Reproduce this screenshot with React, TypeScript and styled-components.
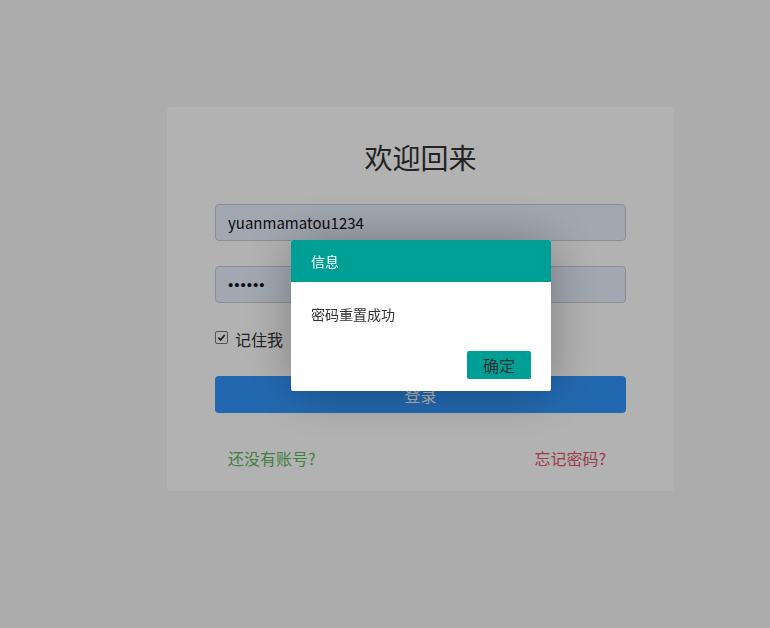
import React from "react";
import styled, { createGlobalStyle } from "styled-components";

const GlobalStyle = createGlobalStyle`
  html, body {
    margin: 0;
    padding: 0;
    background: #f7f7f7;
    font-family: "Noto Sans CJK SC", "Open Sans", sans-serif;
  }
  #root {
    min-height: 628px;
  }
`;

const Page = styled.div`
  min-height: 628px;
  padding: 107px 0 0 167px;
  box-sizing: border-box;
`;

const Card = styled.div`
  width: 507px;
  box-sizing: border-box;
  background: #fff;
  border-radius: 4px;
  padding: 29px 48px 22px;
  display: flex;
  flex-direction: column;
`;

const Title = styled.h2`
  margin: 0 0 26px;
  font-size: 28px;
  font-weight: 400;
  line-height: 42px;
  text-align: center;
  color: #333;
`;

const Input = styled.input<{ $mb?: number; $dots?: boolean }>`
  height: 37px;
  box-sizing: border-box;
  border: 1px solid #c9ccd3;
  border-radius: 4px;
  background: #e8f0fe;
  padding: 0 12px;
  font-family: ${(p) =>
    p.$dots ? '"Liberation Sans", sans-serif' : '"Noto Sans CJK SC", "Open Sans", sans-serif'};
  font-size: 15px;
  letter-spacing: ${(p) => (p.$dots ? "1px" : "0")};
  color: #111;
  margin-bottom: ${(p) => p.$mb ?? 25}px;
  outline: none;
`;

const RememberRow = styled.label`
  display: flex;
  align-items: center;
  gap: 7px;
  font-size: 16px;
  color: #333;
  height: 22px;
  margin: 0 0 26px;
`;

const CheckBox = styled.span`
  width: 11px;
  height: 11px;
  border: 1px solid #767676;
  border-radius: 2px;
  background: #fff;
  display: flex;
  align-items: center;
  justify-content: center;
  margin-top: -4px;
`;

const LoginButton = styled.button`
  height: 37px;
  border: none;
  border-radius: 4px;
  background: #3296fc;
  color: #fff;
  font-family: "Noto Sans CJK SC", "Open Sans", sans-serif;
  font-size: 16px;
  margin-bottom: 34px;
`;

const Links = styled.div`
  display: flex;
  justify-content: space-between;
  padding: 0 20px 0 13px;
  font-size: 16px;
  line-height: 22px;
`;

const LinkText = styled.a<{ $color: string }>`
  color: ${(p) => p.$color};
  text-decoration: none;
`;

const Shade = styled.div`
  position: fixed;
  inset: 0;
  background: #000;
  opacity: 0.3;
`;

const Dialog = styled.div`
  position: fixed;
  left: 291px;
  top: 240px;
  width: 260px;
  background: #fff;
  border-radius: 2px;
  box-shadow: 1px 1px 50px rgba(0, 0, 0, 0.3);
  overflow: hidden;
`;

const DialogTitle = styled.div`
  height: 42px;
  line-height: 42px;
  padding: 0 20px;
  background: #009f95;
  color: #fff;
  font-size: 14px;
`;

const DialogBody = styled.div`
  padding: 20px;
  font-size: 14px;
  line-height: 24px;
  color: #333;
`;

const DialogFooter = styled.div`
  display: flex;
  justify-content: flex-end;
  padding: 5px 20px 12px;
`;

const DialogButton = styled.a`
  height: 28px;
  line-height: 28px;
  padding: 0 16px;
  background: #009f95;
  border-radius: 2px;
  color: #333;
  font-size: 16px;
  cursor: pointer;
`;

export default function App() {
  return (
    <>
      <GlobalStyle />
      <Page>
        <Card>
          <Title>欢迎回来</Title>
          <Input defaultValue="yuanmamatou1234" />
          <Input type="password" defaultValue="123456" $dots $mb={25} />
          <RememberRow>
            <CheckBox>
              <svg width="9" height="9" viewBox="0 0 10 10">
                <path d="M1.5 5.2 L4 7.6 L8.6 2.2" fill="none" stroke="#333" strokeWidth="2" />
              </svg>
            </CheckBox>
            记住我
          </RememberRow>
          <LoginButton>登录</LoginButton>
          <Links>
            <LinkText $color="#5cb85c">还没有账号?</LinkText>
            <LinkText $color="#e0566e">忘记密码?</LinkText>
          </Links>
        </Card>
      </Page>
      <Shade />
      <Dialog>
        <DialogTitle>信息</DialogTitle>
        <DialogBody>密码重置成功</DialogBody>
        <DialogFooter>
          <DialogButton>确定</DialogButton>
        </DialogFooter>
      </Dialog>
    </>
  );
}
